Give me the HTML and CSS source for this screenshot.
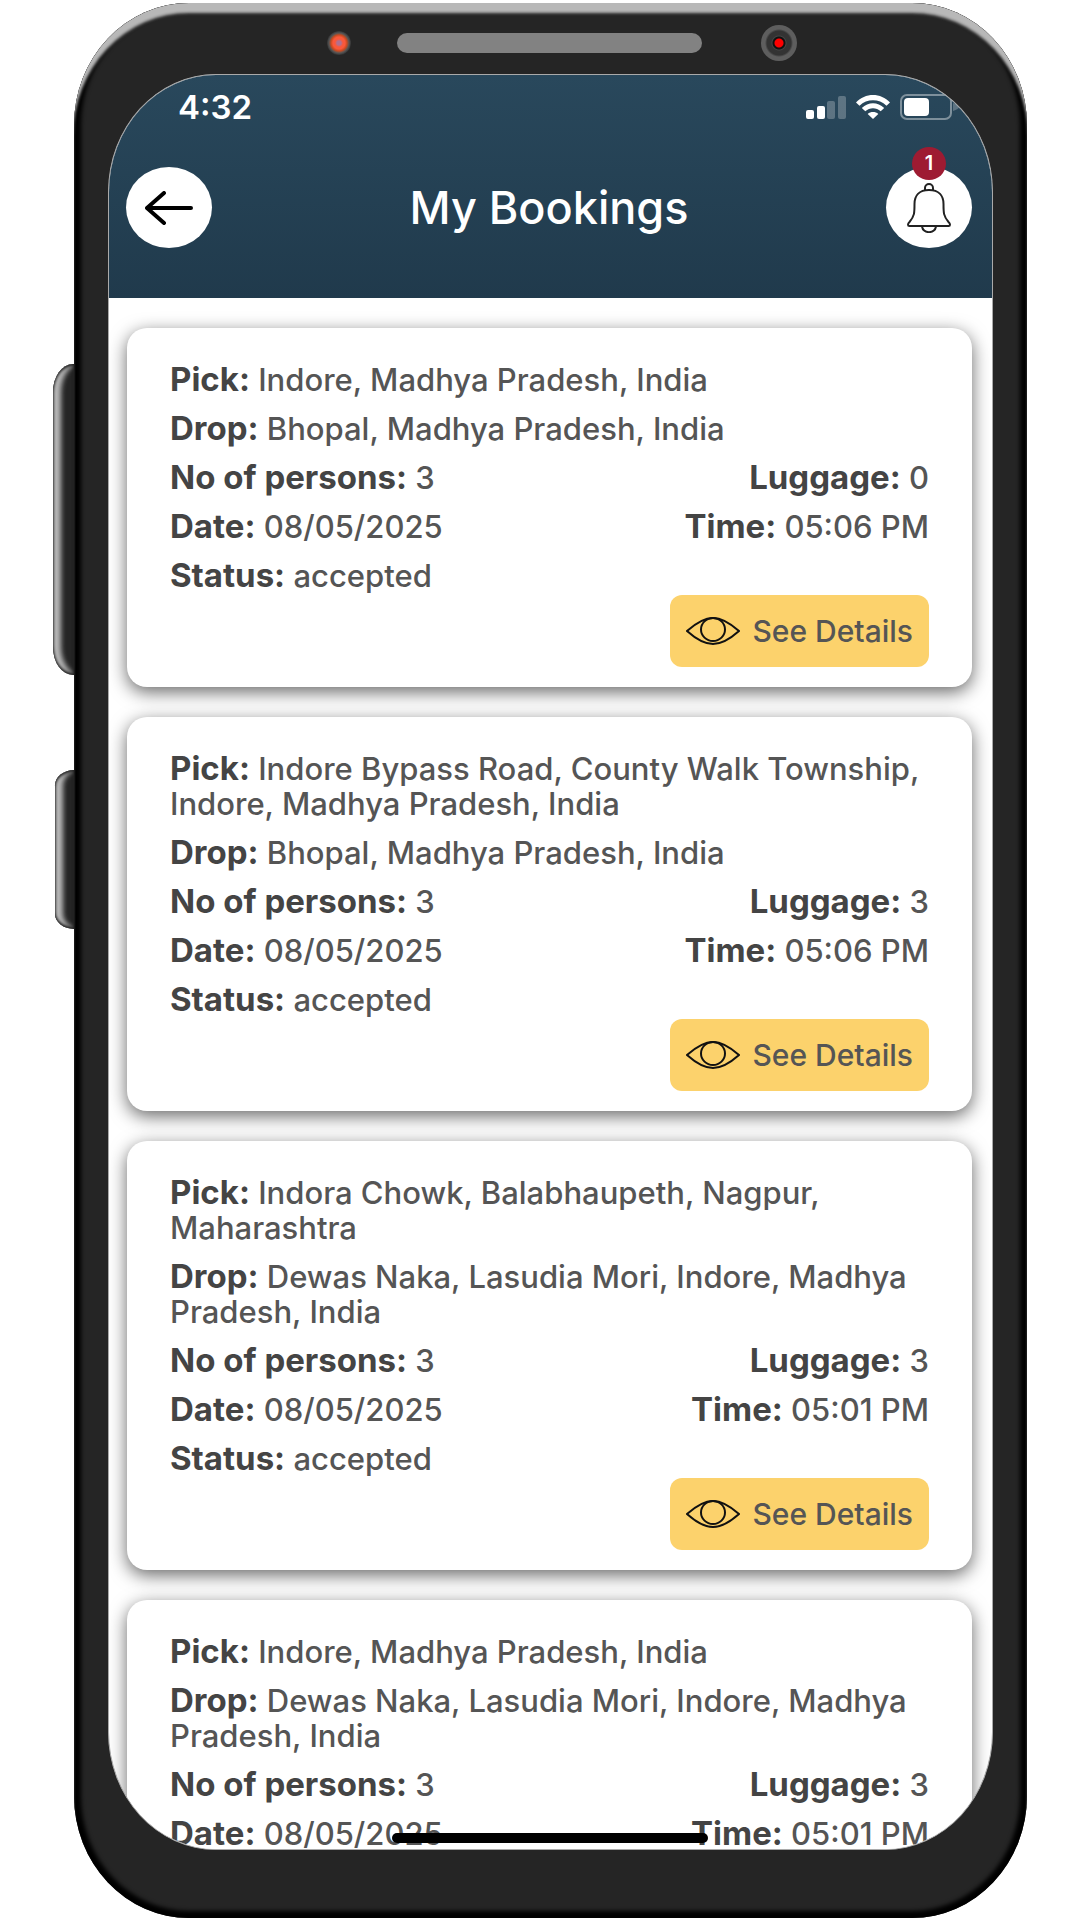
FILE: index.html
```html
<!DOCTYPE html>
<html lang="en">

<head>
    <meta charset="UTF-8">
    <meta name="viewport" content="width=device-width, initial-scale=1.0">
    <title>My Bookings</title>
    <link rel="stylesheet" href="styles.css">
</head>

<body>
    <!-- shared icons -->
    <svg class="sprite" aria-hidden="true">
        <symbol id="eye" viewBox="0 0 54 28">
            <path d="M1 14C10 6 18 1 27 1s17 5 26 13c-9 8-17 13-26 13S10 22 1 14z" />
            <ellipse cx="27" cy="12.500" rx="12" ry="11.500" />
        </symbol>
    </svg>

    <div class="device">
        <div class="side-keys">
            <span class="key key-volume"></span>
            <span class="key key-power"></span>
        </div>

        <div class="phone">
            <div class="bezel-top">
                <span class="led"></span>
                <span class="speaker"></span>
                <span class="camera"></span>
            </div>

            <div class="screen">
                <header class="header">
                    <div class="status-bar">
                        <span class="clock">4:32</span>
                        <svg class="icon-signal" viewBox="0 0 40 24" aria-hidden="true">
                            <rect x="0" y="15" width="8" height="9" rx="2" />
                            <rect x="11" y="11" width="8" height="13" rx="2" />
                            <rect class="dim" x="21" y="6" width="8" height="18" rx="2" />
                            <rect class="dim" x="32" y="1" width="8" height="23" rx="2" />
                        </svg>
                        <svg class="icon-wifi" viewBox="0 0 34 24" aria-hidden="true">
                            <path d="M0 7.500C9-2.500 25-2.500 34 7.500l-3.500 3.300C23 3.500 11 3.500 3.500 10.800z" />
                            <path d="M5.800 13c6.500-6.300 15.900-6.300 22.400 0l-3.500 3.300c-4.500-4-10.900-4-15.400 0z" />
                            <path d="M11.700 19c3-2.600 7.600-2.600 10.600 0L17 24z" />
                        </svg>
                        <svg class="icon-battery" viewBox="0 0 60 26" aria-hidden="true">
                            <rect class="shell" x="1" y="1" width="50" height="24" rx="6" />
                            <rect x="4" y="4" width="25" height="18" rx="4" />
                            <path class="dim" d="M53 9c4 1 6 3 6 4s-2 3-6 4z" />
                        </svg>
                    </div>

                    <div class="title-bar">
                        <button class="round-button" type="button" aria-label="Back">
                            <svg class="icon-back" viewBox="0 0 48 34" aria-hidden="true">
                                <path d="M46 17H2M19 2L2 17l17 15" />
                            </svg>
                        </button>
                        <h1>My Bookings</h1>
                        <button class="round-button" type="button" aria-label="Notifications">
                            <svg class="icon-bell" viewBox="0 0 44 50" aria-hidden="true">
                                <path d="M18 7V5a4 4 0 0 1 8 0v2" />
                                <path d="M22 7C12 7 7.500 13 7.500 21c0 9 0 12-5 18-2 2-2 4 0 4h39c2 0 2-2 0-4-5-6-5-9-5-18C36.500 13 32 7 22 7z" />
                                <path d="M15 43.500c1 7.500 13 7.500 14 0" />
                            </svg>
                            <span class="badge">1</span>
                        </button>
                    </div>
                </header>

                <main class="bookings">
                    <article class="card">
                        <p><b>Pick:</b> Indore, Madhya Pradesh, India</p>
                        <p><b>Drop:</b> Bhopal, Madhya Pradesh, India</p>
                        <div class="row">
                            <p><b>No of persons:</b> 3</p>
                            <p><b>Luggage:</b> 0</p>
                        </div>
                        <div class="row">
                            <p><b>Date:</b> 08/05/2025</p>
                            <p><b>Time:</b> 05:06 PM</p>
                        </div>
                        <p><b>Status:</b> accepted</p>
                        <button class="details" type="button"><svg aria-hidden="true"><use href="#eye" /></svg>See Details</button>
                    </article>

                    <article class="card">
                        <p><b>Pick:</b> Indore Bypass Road, County Walk Township, Indore, Madhya Pradesh, India</p>
                        <p><b>Drop:</b> Bhopal, Madhya Pradesh, India</p>
                        <div class="row">
                            <p><b>No of persons:</b> 3</p>
                            <p><b>Luggage:</b> 3</p>
                        </div>
                        <div class="row">
                            <p><b>Date:</b> 08/05/2025</p>
                            <p><b>Time:</b> 05:06 PM</p>
                        </div>
                        <p><b>Status:</b> accepted</p>
                        <button class="details" type="button"><svg aria-hidden="true"><use href="#eye" /></svg>See Details</button>
                    </article>

                    <article class="card">
                        <p><b>Pick:</b> Indora Chowk, Balabhaupeth, Nagpur, Maharashtra</p>
                        <p><b>Drop:</b> Dewas Naka, Lasudia Mori, Indore, Madhya Pradesh, India</p>
                        <div class="row">
                            <p><b>No of persons:</b> 3</p>
                            <p><b>Luggage:</b> 3</p>
                        </div>
                        <div class="row">
                            <p><b>Date:</b> 08/05/2025</p>
                            <p><b>Time:</b> 05:01 PM</p>
                        </div>
                        <p><b>Status:</b> accepted</p>
                        <button class="details" type="button"><svg aria-hidden="true"><use href="#eye" /></svg>See Details</button>
                    </article>

                    <article class="card">
                        <p><b>Pick:</b> Indore, Madhya Pradesh, India</p>
                        <p><b>Drop:</b> Dewas Naka, Lasudia Mori, Indore, Madhya Pradesh, India</p>
                        <div class="row">
                            <p><b>No of persons:</b> 3</p>
                            <p><b>Luggage:</b> 3</p>
                        </div>
                        <div class="row">
                            <p><b>Date:</b> 08/05/2025</p>
                            <p><b>Time:</b> 05:01 PM</p>
                        </div>
                    </article>
                </main>

                <span class="home-indicator"></span>
            </div>
        </div>
    </div>
</body>

</html>
```
FILE: styles.css
```css
* {
    box-sizing: border-box;
}

body {
    margin: 0;
    background-color: #fff;
    color: #555;
    font-family: Inter, "Liberation Sans", sans-serif;
    font-size: 31px;
    font-weight: 500;
    line-height: 35px;
}

h1,
p {
    margin: 0;
}

button {
    padding: 0;
    border: none;
    color: inherit;
    font: inherit;
    cursor: pointer;
}

svg {
    flex: none;
}

.sprite {
    position: absolute;
    width: 0;
    height: 0;
}

/* phone body */
.device {
    display: flex;
    height: 100vh;
    padding: 3px 53px 2px;
}

.side-keys {
    display: flex;
    flex-direction: column;
    align-items: flex-end;
    width: 21px;
    padding-top: 361px;
    gap: 95px;
}

.key {
    background-color: #252525;
    box-shadow: inset 0 2px 3px #222, inset 0 -2px 3px #222, inset 9px 0 5px -1px #b8b8b8;
}

.key-volume {
    width: 21px;
    height: 311px;
    border-radius: 20px 0 0 20px / 28px 0 0 28px;
}

.key-power {
    width: 19px;
    height: 159px;
    border-radius: 20px 0 0 20px / 16px 0 0 16px;
}

.phone {
    display: flex;
    flex: 1;
    flex-direction: column;
    min-width: 0;
    padding: 0 34px 68px;
    border-radius: 115px / 122px;
    background-color: #252525;
    box-shadow: inset 0 11px 3px -1px #b8b8b8, inset 0 0 4px 7px #000;
}

.bezel-top {
    display: flex;
    flex: none;
    align-items: center;
    justify-content: center;
    height: 71px;
    padding: 8px 0 0 22px;
}

.led {
    width: 24px;
    height: 24px;
    margin-right: 46px;
    border-radius: 50%;
    background: radial-gradient(circle, #b07090 0 2px, #f9583b 4px 6px, #c94a20 8px, #555 10px, #333 12px);
}

.speaker {
    width: 305px;
    height: 20px;
    margin-right: 59px;
    border-radius: 10px;
    background-color: #828282;
}

.camera {
    width: 36px;
    height: 36px;
    border-radius: 50%;
    background: radial-gradient(circle, #f00 0 4px, #111 5px 6px, #444 7px, #333 8px 12px, #5e5e5e 14px 18px);
}

/* screen */
.screen {
    position: relative;
    flex: 1;
    min-height: 0;
    overflow: hidden;
    border: 1px solid #aaa;
    border-radius: 108px / 118px;
    background-color: #fff;
}

.header {
    padding: 12px 20px 50px 17px;
    background: linear-gradient(#29485c, #203a4c);
    color: #fff;
}

.status-bar {
    display: flex;
    align-items: center;
    height: 40px;
    padding: 0 12px 0 52px;
    gap: 10px;
    fill: #fff;
}

.clock {
    flex: 1;
    font-size: 33px;
    font-weight: 600;
}

.icon-signal {
    width: 40px;
    height: 24px;
}

.icon-wifi {
    width: 34px;
    height: 24px;
}

.icon-battery {
    width: 60px;
    height: 26px;
}

.dim {
    opacity: 0.25;
}

.shell {
    fill: none;
    stroke: #fff;
    stroke-width: 2px;
    opacity: 0.4;
}

.title-bar {
    display: flex;
    align-items: center;
    justify-content: space-between;
    margin-top: 40px;
}

.title-bar h1 {
    font-size: 45px;
    font-weight: 500;
    line-height: 54px;
}

.round-button {
    position: relative;
    display: flex;
    align-items: center;
    justify-content: center;
    width: 86px;
    height: 81px;
    border-radius: 50%;
    background-color: #fff;
}

.icon-back {
    width: 48px;
    height: 34px;
    fill: none;
    stroke: #000;
    stroke-width: 4px;
    stroke-linecap: round;
    stroke-linejoin: round;
}

.icon-bell {
    width: 44px;
    height: 50px;
    fill: none;
    stroke: #222;
    stroke-width: 2px;
}

.badge {
    position: absolute;
    top: -20px;
    left: 26px;
    width: 34px;
    height: 33px;
    border-radius: 50%;
    background-color: #9e1b32;
    color: #fff;
    font-size: 20px;
    font-weight: 600;
    line-height: 33px;
    text-align: center;
}

/* booking list */
.bookings {
    display: flex;
    flex-direction: column;
    padding: 30px 20px 30px 18px;
    gap: 30px;
}

.card {
    display: flex;
    flex-direction: column;
    padding: 34px 43px 20px;
    gap: 14px;
    border-radius: 20px;
    background-color: #fff;
    box-shadow: 0 5px 18px rgba(0, 0, 0, 0.6);
}

.card b {
    color: #444;
    font-size: 33px;
    font-weight: 700;
    line-height: 1;
}

.row {
    display: flex;
    justify-content: space-between;
}

.details {
    display: flex;
    align-items: center;
    align-self: flex-end;
    height: 72px;
    margin-top: -12px;
    padding: 0 16px;
    gap: 12px;
    border-radius: 12px;
    background-color: #fcd26c;
    font-size: 30px;
}

.details svg {
    width: 54px;
    height: 28px;
    fill: none;
    stroke: #111;
    stroke-width: 2px;
}

.home-indicator {
    position: absolute;
    bottom: 6px;
    left: 50%;
    width: 316px;
    height: 10px;
    margin-left: -159px;
    border-radius: 5px;
    background-color: #000;
}
```
